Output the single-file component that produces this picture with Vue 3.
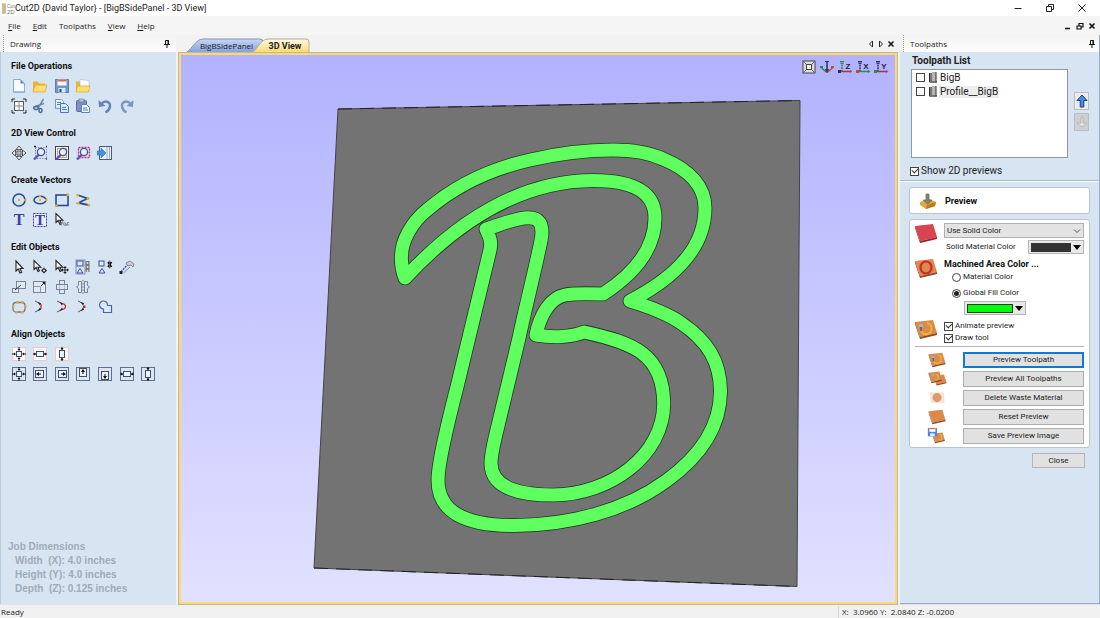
<script setup>
import { ref } from 'vue'

const menus = ['File', 'Edit', 'Toolpaths', 'View', 'Help']

const frame = '<rect x="1.5" y="1.5" width="13" height="13" fill="#dbe5f3" stroke="#5d6f8c"/>'
const pinkFrame = '<rect x="1.5" y="1.5" width="13" height="13" fill="#fffafa" stroke="#eec6cc"/>'
const sq = '<rect x="5.5" y="5.5" width="5" height="5" fill="#eef3fa" stroke="#3f4f6b"/>'
const hArrows = '<path d="M1 8h3M12 8h3" stroke="#111"/><path d="M5 8L3 6.500v3zM11 8l2-1.500v3z" fill="#111"/>'
const vArrows = '<path d="M8 1v3M8 12v3" stroke="#111"/><path d="M8 5L6.500 3h3zM8 11l-1.500 2h3z" fill="#111"/>'
const hBox = '<rect x="4.500" y="5.500" width="7" height="5" fill="#eef3fa" stroke="#3f4f6b"/><path d="M1 8h3M12 8h3" stroke="#111"/><path d="M4 8L2 6.500v3zM12 8l2-1.500v3z" fill="#111"/>'
const vBox = '<rect x="5.500" y="4.500" width="5" height="7" fill="#eef3fa" stroke="#3f4f6b"/><path d="M8 1v3M8 12v3" stroke="#111"/><path d="M8 4L6.500 2h3zM8 12l-1.500 2h3z" fill="#111"/>'
const pointer = '<path d="M5 2v10l2.300-2L9 14l1.700-.8L9 9.500h3z" fill="#fff" stroke="#222" stroke-width="1.100"/>'
const smallPointer = '<path d="M2 1.500v9l2.200-2L6 12.500l1.400-.7L5.800 8.200h3z" fill="#fff" stroke="#222" stroke-width="1.100"/>'
const lens = '<path d="M7 9.500L2 14.500" stroke="#6a4fc0" stroke-width="2.400"/><circle cx="9" cy="7" r="3.600" fill="#e8eefc" stroke="#4b4f86" stroke-width="1.300"/>'
const nodes = '<path d="M3 2l6 3M3 13l6-3" stroke="#556" stroke-width="1" fill="none"/><path d="M5.500 3l3.500 1.200L8 6.500zM5.500 12L9 10.800 8 8.500z" fill="#223"/>'

const art = {
  newFile: '<path d="M2.500 1.500h7l4 4v9h-11z" fill="#f7fbff" stroke="#8aa9d6"/><path d="M9.500 1.500v4h4z" fill="#5f8fd8"/><path d="M3 13h10v1.500H3z" fill="#9fc0ea"/>',
  open: '<path d="M1 3.500h5l1.500 2H13v8H1z" fill="#e9b437"/><path d="M3.500 7H15l-2 7H1z" fill="#ffdf74" stroke="#dba52d" stroke-width=".7"/>',
  save: '<path d="M1.500 1.500h13v13h-13z" fill="#6f97d6" stroke="#5a7cbc"/><path d="M3.500 1.500h9v6h-9z" fill="#f6f8fb"/><path d="M3.500 1.500h9v2h-9z" fill="#e0644d"/><path d="M4.500 10h7v4.500h-7z" fill="#dfe7f2"/><path d="M5.500 11h2v3h-2z" fill="#345"/>',
  import: '<path d="M1 3.500h5l1.500 1.500H14v9H1z" fill="#e9b437"/><path d="M5 1.500l9 1v7H5z" fill="#fff" stroke="#a5b7ce" stroke-width=".6"/><path d="M2.500 8H15l-1.500 6H1z" fill="#ffdf74" stroke="#dba52d" stroke-width=".7"/>',
  jobSetup: '<path d="M1 4V1h3M12 1h3v3M15 12v3h-3M4 15H1v-3" stroke="#222" fill="none"/><rect x="3.500" y="3.500" width="9" height="9" fill="#fff" stroke="#555"/><path d="M8 3v10M3 8h10" stroke="#888"/>',
  cut: '<path d="M11.500 1L6.500 9.500M3 8.500l9-3" stroke="#7187a8" stroke-width="1.500"/><ellipse cx="4" cy="10" rx="2.300" ry="1.500" fill="none" stroke="#4f6da5" stroke-width="1.500"/><ellipse cx="8.500" cy="12.500" rx="1.500" ry="2" fill="none" stroke="#4f6da5" stroke-width="1.500"/>',
  copy: '<path d="M1.500 1.500h6l2 2v7h-8z" fill="#e8f1fd" stroke="#6c97d3"/><path d="M6.500 5.500h5l3 3v6h-8z" fill="#d8e8fb" stroke="#4879c0"/><path d="M3 4.500h4M3 6.500h3M8 9.500h4M8 11.500h5" stroke="#4c80c6"/>',
  paste: '<rect x="1.500" y="2.500" width="10" height="11" rx="1" fill="#7f8fc6" stroke="#5b6cab"/><rect x="4" y="1" width="5" height="3" fill="#b9c1d6" stroke="#67718f" stroke-width=".6"/><path d="M6.500 6.500h5l3 3v5h-8z" fill="#f1f6fd" stroke="#5c82be"/><path d="M8 10h4M8 12h5" stroke="#4c80c6"/>',
  undo: '<path d="M4 6c5-5 9.500-1.500 9 2.500-.3 2.500-2 4.500-4.500 6" fill="none" stroke="#6583b8" stroke-width="2.400"/><path d="M1.500 2l.5 7 6.500-1z" fill="#6583b8"/>',
  redo: '<path d="M12 6C7 1 2.500 4.500 3 8.500c.3 2.500 2 4.500 4.500 6" fill="none" stroke="#7c97bd" stroke-width="2.400"/><path d="M14.500 2L14 9 7.500 8z" fill="#7c97bd"/>',
  pan: '<path d="M8 1l3 3.500H5zM8 15l3-3.500H5zM1 8l3.500-3v6zM15 8l-3.500-3v6z" fill="#eee" stroke="#444" stroke-width=".9"/><path d="M8 4v8M4 8h8" stroke="#444" stroke-width="3"/><path d="M8 4.500v7M4.500 8h7" stroke="#e9eef5" stroke-width="1"/>',
  zoomBox: '<rect x="3.500" y="2.500" width="11" height="11" fill="none" stroke="#7f95b4" stroke-dasharray="1.500 1"/><path d="M2 1.500h2M14 1.500h1M14 14h1" stroke="#222" stroke-width="1.500"/>' + lens,
  zoomFit: '<rect x="1.500" y="1.500" width="13" height="13" fill="#f5f6f4" stroke="#444"/><rect x="3.500" y="3.500" width="9" height="9" fill="none" stroke="#aaa"/>' + lens,
  zoomSel: '<rect x="3.500" y="2.500" width="11" height="10" fill="none" stroke="#c23a8e" stroke-width="1.500" stroke-dasharray="2 1"/>' + lens,
  toggleView: '<rect x="2.500" y="1.500" width="12" height="13" fill="#eef1fb" stroke="#4a5b80"/><path d="M10 2v12M12.500 2v12" stroke="#9aa5d4"/><path d="M0 6h4V3l5 5-5 5v-3H0z" fill="#3d92e8" stroke="#2a6fc0" stroke-width=".6"/>',
  circle: '<circle cx="8" cy="8" r="6" fill="none" stroke="#2b4d8e" stroke-width="1.600"/><path d="M7 7h2v2H7zM13 7h2.500v2H13z" fill="#e3a72d"/>',
  ellipse: '<ellipse cx="8" cy="8" rx="6" ry="3.800" fill="none" stroke="#2b4d8e" stroke-width="1.600"/><path d="M7 7h2v2H7zM7 3h2v2H7zM13 7h2.500v2H13z" fill="#e3a72d"/>',
  rect: '<rect x="2" y="3" width="12" height="10.500" fill="none" stroke="#2b4d8e" stroke-width="1.600"/><path d="M12.500 1.500H15V4h-2.500zM1 12.500h2.500V15H1z" fill="#e3a72d"/>',
  polyline: '<path d="M2.500 3l10 3.500L3.500 11l10 2" fill="none" stroke="#2b4d8e" stroke-width="1.800"/><path d="M1.500 2h2.500v2.500H1.500zM11.500 5.500H14V8h-2.500zM2 10h2.500v2.500H2zM12.500 12H15v2.500h-2.500z" fill="#e3a72d"/>',
  text: '<text x="8" y="13" text-anchor="middle" font-family="Liberation Serif, serif" font-weight="bold" font-size="16" fill="#3c3f9a">T</text>',
  textBox: '<rect x="1.500" y="1.500" width="13" height="13" fill="#e7ebfb" stroke="#3c3f9a" stroke-dasharray="2 1"/><text x="8" y="13" text-anchor="middle" font-family="Liberation Serif, serif" font-weight="bold" font-size="15" fill="#3c3f9a">T</text>',
  textEdit: smallPointer + '<path d="M7 13.500l1.500-4 1.500 4M11 10v3.500h1.500v-1.500H11M15 10.500h-1.500v2.500H15" fill="none" stroke="#888" stroke-width="1"/>',
  select: pointer,
  nodeEdit: smallPointer + '<path d="M12 8.500l3 3-3 3-3-3z" fill="#222"/><circle cx="12" cy="11.500" r="1" fill="#fff"/>',
  move: smallPointer + '<path d="M11 7l1.800 2h-3.600zM11 15l1.800-2h-3.600zM7 11l2-1.800v3.600zM15 11l-2-1.800v3.600z" fill="#222"/><path d="M11 8v6M8 11h6" stroke="#222"/>',
  group: '<rect x="2" y="2" width="6" height="5" fill="#dfe6ff" stroke="#3b4da0"/><path d="M2 14l3-4.500L8 14z" fill="#dfe6ff" stroke="#3b4da0"/><rect x="1" y="1" width="9" height="14" fill="none" stroke="#67739b" stroke-width=".7"/><path d="M12.500 2v11" stroke="#777" stroke-width="4"/><path d="M12.500 3v2M12.500 7v2M12.500 11v2" stroke="#ddd" stroke-width="1.500"/>',
  ungroup: '<rect x="2" y="2" width="5" height="5" fill="#dfe6ff" stroke="#3b4da0"/><path d="M2 14l3-4.500L8 14z" fill="#dfe6ff" stroke="#3b4da0"/><path d="M11 3l3.500 5M14.500 3L11 8" stroke="#111" stroke-width="1.800"/><path d="M12.700 1.500v8" stroke="#555"/>',
  measure: '<path d="M2 13l7-8" stroke="#4a56a8" stroke-dasharray="2 1" stroke-width="1.500"/><path d="M4.500 14l6.500-6" stroke="#889" stroke-width="1"/><path d="M0.500 12h3v3h-3z" fill="#223"/><path d="M7 4l4-2 4 3-1 3-2-2-3 1z" fill="#ccd" stroke="#777" stroke-width=".8"/>',
  moveSize: '<rect x="5.500" y="2.500" width="9" height="7" fill="#e2e9f2" stroke="#75849b"/><rect x="1.500" y="9.500" width="6" height="4" fill="#e2e9f2" stroke="#75849b"/><path d="M4 11l6-5" stroke="#333"/>',
  scale: '<rect x="1.500" y="2.500" width="12" height="11" fill="#e2e9f2" stroke="#75849b"/><path d="M1.500 7.500h7v6" fill="none" stroke="#8d99ab"/><path d="M9 7l3-3" stroke="#222"/><path d="M13 3v3l-3-3z" fill="#222"/>',
  rotate: '<rect x="5.500" y="1.500" width="5" height="13" fill="#dde6f0" stroke="#75849b"/><rect x="2.500" y="5.500" width="11" height="5" fill="#dde6f0" fill-opacity=".6" stroke="#75849b"/>',
  mirror: '<path d="M6.500 2.500h-3v4l-2 1.500 2 1.500v4h3zM9.500 2.500h3v4l2 1.500-2 1.500v4h-3z" fill="#dde6f0" stroke="#75849b"/><path d="M8 1v14" stroke="#889" stroke-dasharray="2 1"/>',
  offset: '<rect x="2" y="3.500" width="12" height="9.500" rx="3" fill="none" stroke="#5d7fb4" stroke-width="1.300"/><path d="M1 6h2.500v2.500H1zM5 2h2.500v2.500H5zM10 2h2.500v2.500H10zM13 6h2.500v2.500H13zM4 12h2.500v2.500H4zM10 12h2.500v2.500H10z" fill="#e3a72d"/>',
  joinLine: nodes + '<path d="M9 5v5" stroke="#d32626" stroke-width="1.300"/>',
  joinCurve: nodes + '<path d="M8.500 4.500c4 1 4 5 0 6" stroke="#d32626" fill="none" stroke-width="1.200"/>',
  joinMove: nodes + '<path d="M8 6.500h2.500v2.500H8z" fill="#d32626"/>',
  weld: '<path d="M10.500 6.500h4v7h-8v-3.500a4 4 0 1 1 4-3.500z" fill="#dce7fb" stroke="#4467ab" stroke-width="1.200"/>',
  centerP: pinkFrame + sq + hArrows + vArrows,
  centerHP: pinkFrame + hBox,
  centerVP: pinkFrame + vBox,
  center: frame + sq + hArrows + vArrows,
  left: frame + '<rect x="3.500" y="4.500" width="8" height="7" fill="#eef3fa" stroke="#3f4f6b"/><path d="M4 8l3-2v4z" fill="#111"/><path d="M5 8h4" stroke="#111"/>',
  right: frame + '<rect x="4.500" y="4.500" width="8" height="7" fill="#eef3fa" stroke="#3f4f6b"/><path d="M12 8L9 6v4z" fill="#111"/><path d="M7 8h4" stroke="#111"/>',
  top: frame + '<rect x="4.500" y="2.500" width="7" height="8" fill="#eef3fa" stroke="#3f4f6b"/><path d="M8 3l2 3H6z" fill="#111"/><path d="M8 5v3" stroke="#111"/>',
  bottom: frame + '<rect x="4.500" y="5.500" width="7" height="8" fill="#eef3fa" stroke="#3f4f6b"/><path d="M8 13l-2-3h4z" fill="#111"/><path d="M8 8v3" stroke="#111"/>',
  alignH: frame + hBox,
  alignV: frame + vBox
}

const axis = (a, ca, b, cb, letter) =>
  `<path d="M5 13V4" stroke="${a}" stroke-width="1.500" stroke-dasharray="2 .7"/><path d="M4 12.500h10" stroke="${cb}" stroke-width="1.500"/><path d="M3 2.500h4M3 4h4" stroke="${a}"/><path d="M1 11h3v3H1z" fill="${ca}"/><path d="M13 11l2.500 1.500L13 14z" fill="${b}"/><text x="11" y="9.500" text-anchor="middle" font-family="Liberation Sans, sans-serif" font-weight="bold" font-size="8" fill="#1e2440">${letter}</text>`

const viewTools = [
  { name: 'Fit view', art: '<rect x="2" y="2" width="12" height="12" fill="#dcdcd8" stroke="#444"/><rect x="5.500" y="5.500" width="5" height="5" fill="#f4f4f0" stroke="#444"/><path d="M2 2l3 3M14 2l-3 3M2 14l3-3M14 14l-3-3" stroke="#666"/>' },
  { name: 'Isometric view', art: '<path d="M8 3v9" stroke="#27345f" stroke-width="1.500"/><path d="M6 2.500h4" stroke="#27345f"/><path d="M8 13.500L2.500 9" stroke="#2c8a4a" stroke-width="1.500"/><path d="M8 13.500L13.500 9" stroke="#c04a3a" stroke-width="1.500"/><path d="M1 7h3v2H1z" fill="#2c8a4a"/><path d="M12 7h3v2h-3z" fill="#c04a3a"/><path d="M6 10h4l-2 4z" fill="#27345f"/>' },
  { name: 'View along Z', art: axis('#2c8a4a', '#27345f', '#c04a3a', '#a23a46', 'Z') },
  { name: 'View along X', art: axis('#27345f', '#c04a3a', '#2c8a4a', '#2c8a4a', 'X') },
  { name: 'View along Y', art: axis('#27345f', '#2c8a4a', '#c04a3a', '#a23a46', 'Y') }
]

const groups = [
  { title: 'File Operations', rows: [['newFile', 'open', 'save', 'import'], ['jobSetup', 'cut', 'copy', 'paste', 'undo', 'redo']] },
  { title: '2D View Control', rows: [['pan', 'zoomBox', 'zoomFit', 'zoomSel', 'toggleView']] },
  { title: 'Create Vectors', rows: [['circle', 'ellipse', 'rect', 'polyline'], ['text', 'textBox', 'textEdit']] },
  { title: 'Edit Objects', rows: [['select', 'nodeEdit', 'move', 'group', 'ungroup', 'measure'], ['moveSize', 'scale', 'rotate', 'mirror'], ['offset', 'joinLine', 'joinCurve', 'joinMove', 'weld']] },
  { title: 'Align Objects', rows: [['centerP', 'centerHP', 'centerVP'], ['center', 'left', 'right', 'top', 'bottom', 'alignH', 'alignV']] }
]

const letterPath =
  'M405 278C402 270 401 262 401.500 255C402 240 412 222 427 210C455 186 490 169 530 160C560 153 590 150 613 150C635 150 650 153 663 159C690 170 705 187 705 208C705 245 680 275 630 301C650 307 668 314 681 323C708 341 720 362 720.500 390C721 430 695 460 666 481C625 511 570 525 515 525.500C465 526 438 512 438 480C438 462 449 418 457 387L490 250C492 240 489 236 486 229C500 225 515 218 528 217.700C539 217.500 543 224 541.700 236C541 245 526 305 519 338L496 434C493 447 491 455 491 463C491 485 512 495 553 495C610 495 664 455 663.700 403C663 355 635 343 584 332C572 337 553 338 536 335C540 315 550 298 565 295C575 293 590 293.500 603 294C640 270 655 245 655 218C655 190 630 180.500 593 180.500C520 181 457 222 405 278Z'

const tile = (face, edge) => `<path d="M1 3l18-2 4 13-17 4z" fill="${face}"/><path d="M1 3l5 15v2L1 5zM6 18l17-4v2L6 20z" fill="${edge}"/>`
const wood = tile('#d98a4c', '#8e4a20')
const tiles = {
  red: tile('#d9454f', '#9c2530'),
  ring: wood + '<ellipse cx="12" cy="9.500" rx="5.500" ry="6" fill="none" stroke="#d3262b" stroke-width="2.200"/>',
  carve: wood + '<path d="M13 4c6 1 6 10 0 11-3 .5-5-1-6-3" fill="none" stroke="#f0b030" stroke-width="2"/><path d="M5 5h4v3H5z" fill="#9fb6c4"/><path d="M7 8v4" stroke="#556" stroke-width="1.500"/>',
  double: '<g transform="translate(7 4) scale(.75)">' + wood + '</g><g transform="scale(.8)">' + wood + '</g><path d="M10 4c5 1 5 7 0 8" fill="none" stroke="#f0b030" stroke-width="1.600"/><path d="M5 4h3v3H5z" fill="#9fb6c4"/>',
  waste: '<path d="M2 3h19l1 14H4z" fill="#f5e6dc"/><ellipse cx="12" cy="10" rx="6" ry="6" fill="#dd9b6b"/>',
  plain: wood,
  saveTile: '<g transform="translate(5 5) scale(.75)">' + wood + '<path d="M13 4c6 1 6 10 0 11" fill="none" stroke="#f0b030" stroke-width="2"/></g><path d="M0 0h12v11H0z" fill="#4e86d8"/><path d="M2 0h8v5H2z" fill="#fff"/><path d="M2 0h8v1.500H2z" fill="#e0644d"/><path d="M3 7h6v4H3z" fill="#dfe7f2"/>'
}

const actions = [
  { label: 'Preview Toolpath', icon: 'carve', main: true },
  { label: 'Preview All Toolpaths', icon: 'double' },
  { label: 'Delete Waste Material', icon: 'waste' },
  { label: 'Reset Preview', icon: 'plain' },
  { label: 'Save Preview Image', icon: 'saveTile' }
]

const toolpaths = ref([
  { name: 'BigB', on: false, active: false },
  { name: 'Profile__BigB', on: false, active: true }
])
const show2d = ref(true)
const animate = ref(true)
const drawTool = ref(true)
const fill = ref('global')
const material = ref('Use Solid Color')
</script>

<template>
  <div class="app">
    <header class="titlebar">
      <svg class="logo" width="13" height="13" viewBox="0 0 13 13" aria-hidden="true">
        <path d="M0 1h4v11H0z" fill="#dcd9ae" /><path d="M1 1v11M3 2v9" stroke="#a9a77c" />
        <text x="5" y="6" font-family="Liberation Sans, sans-serif" font-size="5" fill="#777">Cut</text>
        <text x="5" y="12" font-family="Liberation Sans, sans-serif" font-size="6" fill="#777">2D</text>
      </svg>
      <h1>Cut2D {David Taylor} - [BigBSidePanel - 3D View]</h1>
      <div class="winbtns">
        <button aria-label="Minimize"><svg width="10" height="10" viewBox="0 0 10 10"><path d="M1.500 5.500h7" stroke="#222" /></svg></button>
        <button aria-label="Restore"><svg width="10" height="10" viewBox="0 0 10 10"><path d="M1.500 3.500h5v5h-5zM3.500 3.500v-2h5v5h-2" fill="none" stroke="#222" /></svg></button>
        <button aria-label="Close window"><svg width="10" height="10" viewBox="0 0 10 10"><path d="M1.500 1.500l7 7M8.500 1.500l-7 7" stroke="#222" /></svg></button>
      </div>
    </header>

    <nav class="menubar">
      <button v-for="m in menus" :key="m"><span :class="{ key: m !== 'Toolpaths' }">{{ m[0] }}</span>{{ m.slice(1) }}</button>
      <div class="mdi">
        <button aria-label="Minimize view"><svg width="8" height="8" viewBox="0 0 8 8"><path d="M1 6.500h5" stroke="#111" stroke-width="1.500" /></svg></button>
        <button aria-label="Restore view"><svg width="8" height="8" viewBox="0 0 8 8"><path d="M1 4h4v3H1zM3 4V1.500h4V5H5" fill="none" stroke="#111" stroke-width="1.200" /></svg></button>
        <button aria-label="Close view"><svg width="8" height="8" viewBox="0 0 8 8"><path d="M1.500 1.500l5 5M6.500 1.500l-5 5" stroke="#111" stroke-width="1.600" /></svg></button>
      </div>
    </nav>

    <main class="work">
      <aside class="panel left">
        <div class="panelhead">
          <span>Drawing</span>
          <button aria-label="Pin drawing panel"><svg width="8" height="10" viewBox="0 0 8 10"><path d="M2.500 1.500h3v4h-3zM5 1v5M1 5.500h6M4 6v3" fill="none" stroke="#111" /></svg></button>
        </div>
        <div class="drawbody">
          <section v-for="g in groups" :key="g.title" class="toolgroup">
            <h2>{{ g.title }}</h2>
            <div v-for="(row, i) in g.rows" :key="i" class="toolrow">
              <button v-for="t in row" :key="t" :aria-label="t"><svg width="16" height="16" viewBox="0 0 16 16" v-html="art[t]"></svg></button>
            </div>
          </section>
          <dl class="job">
            <dt>Job Dimensions</dt>
            <dd>Width&nbsp; (X): 4.0 inches</dd>
            <dd>Height (Y): 4.0 inches</dd>
            <dd>Depth&nbsp; (Z): 0.125 inches</dd>
          </dl>
        </div>
      </aside>

      <section class="center">
        <div class="tabbar">
          <button class="tab blue">
            <svg viewBox="0 0 80 15" preserveAspectRatio="none" aria-hidden="true">
              <defs><linearGradient id="tabBlue" x1="0" y1="0" x2="0" y2="1"><stop offset="0" stop-color="#c6d7f5" /><stop offset="1" stop-color="#7f9fdc" /></linearGradient></defs>
              <path d="M0 15C6 15 11 1 19 1h57q3 0 3 3v11z" fill="url(#tabBlue)" stroke="#8496b8" />
            </svg>
            <span>BigBSidePanel</span>
          </button>
          <button class="tab gold">
            <svg viewBox="0 0 60 15" preserveAspectRatio="none" aria-hidden="true">
              <defs><linearGradient id="tabGold" x1="0" y1="0" x2="0" y2="1"><stop offset="0" stop-color="#fffbe9" /><stop offset="1" stop-color="#ffd769" /></linearGradient></defs>
              <path d="M0 15C6 15 10 1 18 1h38q3 0 3 3v11z" fill="url(#tabGold)" stroke="#b5ad95" />
            </svg>
            <span>3D View</span>
          </button>
          <div class="tabnav">
            <button aria-label="Previous tab"><svg width="8" height="8" viewBox="0 0 8 8"><path d="M5.500 1v6l-3-3z" fill="#fff" stroke="#222" /></svg></button>
            <button aria-label="Next tab"><svg width="8" height="8" viewBox="0 0 8 8"><path d="M2.500 1v6l3-3z" fill="#fff" stroke="#222" /></svg></button>
            <button aria-label="Close tab"><svg width="8" height="8" viewBox="0 0 8 8"><path d="M1.500 1.500l5 5M6.500 1.500l-5 5" stroke="#111" stroke-width="1.500" /></svg></button>
          </div>
        </div>
        <div class="viewport">
          <svg class="scene" viewBox="181 55 714 547" role="img" aria-label="3D preview of the letter B">
            <path d="M338 109L800 100.500 797 586.500 314 568z" fill="#737373" stroke="#444" stroke-width="1" />
            <path d="M338 109L800 100.500M314 568l483 18.500" stroke="#222" stroke-width="1" stroke-dasharray="14 8" />
            <path :d="letterPath" fill="none" stroke="#1d3d1d" stroke-width="14.600" stroke-linejoin="round" />
            <path :d="letterPath" fill="none" stroke="#5fff5f" stroke-width="13" stroke-linejoin="round" />
          </svg>
          <div class="viewtools">
            <button v-for="v in viewTools" :key="v.name" :aria-label="v.name"><svg width="16" height="16" viewBox="0 0 16 16" v-html="v.art"></svg></button>
          </div>
        </div>
      </section>

      <aside class="panel right">
        <div class="panelhead">
          <span>Toolpaths</span>
          <button aria-label="Pin toolpaths panel"><svg width="8" height="10" viewBox="0 0 8 10"><path d="M2.500 1.500h3v4h-3zM5 1v5M1 5.500h6M4 6v3" fill="none" stroke="#111" /></svg></button>
        </div>
        <div class="pathbody">
          <section class="pathlist">
            <h2>Toolpath List</h2>
            <div class="listrow">
              <ul>
                <li v-for="t in toolpaths" :key="t.name">
                  <label>
                    <input v-model="t.on" type="checkbox" />
                    <svg width="8" height="11" viewBox="0 0 8 11" aria-hidden="true"><path d="M0 1h3v8h5v2H1L0 10z" fill="#777" /><path d="M3 0h4v9H3z" fill="#b5b5b5" /><path d="M7 0v10M0.500 1v9" stroke="#333" /></svg>
                    <span :class="{ active: t.active }">{{ t.name }}</span>
                  </label>
                </li>
              </ul>
              <div class="order">
                <button aria-label="Move up"><svg width="12" height="14" viewBox="0 0 12 14"><path d="M6 1l5 5.500H7.800V13H4.200V6.500H1z" fill="#4b8be0" stroke="#17408c" /></svg></button>
                <button aria-label="Move down" class="off" disabled><svg width="12" height="14" viewBox="0 0 12 14"><path d="M5 2h2v6h4l-5 4-5-4h4z" fill="#e4e4e4" stroke="#a9a9a9" stroke-width=".7" /></svg></button>
              </div>
            </div>
            <label class="show"><input v-model="show2d" type="checkbox" /><span>Show 2D previews</span></label>
          </section>

          <section class="form">
            <div class="card title">
              <svg width="18" height="18" viewBox="0 0 18 18" aria-hidden="true"><path d="M1 10l9-3 7 3-1 4-9 3-6-4z" fill="#e0a83a" /><path d="M7 17l9-3 1-4-9 3z" fill="#b97c1c" /><path d="M7 2h3v6h3l-4.500 4L4 8h3z" fill="#8a8272" stroke="#5f5848" stroke-width=".6" /></svg>
              <h3>Preview</h3>
            </div>
            <div class="card main">
              <div class="block">
                <svg class="tile" width="24" height="21" viewBox="0 0 24 21" aria-hidden="true" v-html="tiles.red"></svg>
                <div class="stack">
                  <div class="selectwrap">
                    <select v-model="material" aria-label="Material"><option>Use Solid Color</option></select>
                    <svg width="8" height="6" viewBox="0 0 8 6" aria-hidden="true"><path d="M1 1.500l3 3 3-3" fill="none" stroke="#555" /></svg>
                  </div>
                  <div class="colorrow">
                    <span id="smc">Solid Material Color</span>
                    <button class="swatch dark" aria-labelledby="smc"><i></i><svg width="8" height="5" viewBox="0 0 8 5"><path d="M0 0h8L4 5z" fill="#000" /></svg></button>
                  </div>
                </div>
              </div>
              <div class="block">
                <svg class="tile" width="24" height="21" viewBox="0 0 24 21" aria-hidden="true" v-html="tiles.ring"></svg>
                <div class="stack area">
                  <h3>Machined Area Color ...</h3>
                  <label class="opt"><input v-model="fill" type="radio" value="material" name="fill" /><span>Material Color</span></label>
                  <label class="opt second"><input v-model="fill" type="radio" value="global" name="fill" /><span>Global Fill Color</span></label>
                  <button class="swatch green" aria-label="Global fill color"><i></i><svg width="8" height="5" viewBox="0 0 8 5"><path d="M0 0h8L4 5z" fill="#000" /></svg></button>
                </div>
              </div>
              <div class="block">
                <svg class="tile" width="24" height="21" viewBox="0 0 24 21" aria-hidden="true" v-html="tiles.carve"></svg>
                <div class="stack checks">
                  <label><input v-model="animate" type="checkbox" /><span>Animate preview</span></label>
                  <label><input v-model="drawTool" type="checkbox" /><span>Draw tool</span></label>
                </div>
              </div>
              <div class="actions">
                <div v-for="a in actions" :key="a.label" class="action">
                  <svg width="22" height="16" viewBox="0 0 24 21" aria-hidden="true" v-html="tiles[a.icon]"></svg>
                  <button :class="{ primary: a.main }">{{ a.label }}</button>
                </div>
              </div>
            </div>
            <button class="close">Close</button>
          </section>
        </div>
      </aside>
    </main>

    <footer class="status">
      <span>Ready</span>
      <span class="coords">X:&nbsp; 3.0960 Y:&nbsp; 2.0840 Z: -0.0200</span>
    </footer>
  </div>
</template>

<style>
html, body, #app { height: 100%; }
body { background: #f0f0f0; }
</style>

<style scoped>
.app {
  height: 100%;
  display: flex;
  flex-direction: column;
  font-family: Roboto, "Noto Sans", sans-serif;
  font-size: 9px;
  line-height: 12px;
  color: #1c1c1c;
  overflow: hidden;
}
.app *, .app { box-sizing: border-box; }
button, select { font: inherit; color: inherit; background: none; border: 0; padding: 0; margin: 0; }
button { display: inline-flex; align-items: center; justify-content: center; white-space: nowrap; }
h1, h2, h3, ul, dl, dt, dd { margin: 0; padding: 0; font-size: inherit; list-style: none; }
svg { display: block; flex: none; }

.menubar, .panelhead, .tab.blue, .status { font-family: "Open Sans", "Noto Sans", sans-serif; font-size: 8px; }

.titlebar { flex: none; height: 16px; background: #fff; display: flex; align-items: center; padding: 0 13px 0 2px; }
.titlebar h1 { font-weight: 400; }
.winbtns { margin-left: auto; display: flex; gap: 22px; }
.winbtns button { width: 10px; height: 10px; }

.menubar { flex: none; height: 19px; display: flex; align-items: center; gap: 12px; padding: 0 4px 0 8px; background: #f5f5f5; }
.key { text-decoration: underline; }
.mdi { margin-left: auto; display: flex; gap: 4px; }

.work { flex: 1; min-height: 0; display: flex; background: #f2f2f2; }
.panel { flex: none; display: flex; flex-direction: column; }
.left { width: 16%; }
.right { width: 200px; border-right: 1px solid #94abc9; }
.panelhead {
  flex: none; height: 17px; display: flex; align-items: center; justify-content: space-between;
  padding: 0 5px 0 6px; margin-left: 3px; border-left: 1px dotted #999;
  background: linear-gradient(#f3f3f3, #fcfcfc);
}
.right .panelhead { padding-right: 3px; }

.drawbody { flex: 1; display: flex; flex-direction: column; gap: 7px; padding: 4px 17px 8px 7px; background: #d7e4f2; border-left: 1px solid #bccbdc; }
.toolgroup h2 { height: 20px; line-height: 20px; padding-left: 3px; font-size: 9px; font-weight: 700; color: #111; }
.toolrow { height: 20px; display: grid; grid-template-columns: repeat(7, 1fr); align-items: center; }
.job { margin-top: auto; line-height: 14px; font-family: "Liberation Sans", Arial, sans-serif; font-size: 10px; font-weight: 700; color: #9eacb9; white-space: nowrap; }
.job dd { padding-left: 7px; }

.center { flex: 1; min-width: 0; display: flex; flex-direction: column; margin: 0 3px; }
.tabbar { flex: none; height: 18px; display: flex; align-items: flex-end; padding: 0 2px 0 5px; }
.tab { position: relative; height: 15px; width: 80px; }
.tab svg { position: absolute; inset: 0; width: 100%; height: 100%; }
.tab span { position: relative; padding-left: 5px; }
.tab.gold { width: 60px; margin-left: -14px; font-weight: 700; }
.tab.gold span { padding-left: 10px; }
.tabnav { margin-left: auto; height: 18px; display: flex; align-items: center; gap: 2px; }
.viewport {
  position: relative; flex: 1; min-height: 0;
  border: 2px solid #ffd96e; outline: 1px solid #bdb8a9;
  background: linear-gradient(#b2b2ff, #e1e1ff);
}
.scene { width: 100%; height: 100%; }
.viewtools { position: absolute; top: 4px; right: 6px; display: flex; gap: 2px; }

.pathbody { flex: 1; background: #d7e4f2; border-bottom: 1px solid #94abc9; }
.pathlist { padding: 0 10px 3px 11px; border-bottom: 1px solid #a9b8c9; }
.pathlist h2 { height: 17px; line-height: 17px; padding-left: 1px; font-size: 10px; font-weight: 700; color: #222; }
.listrow { display: flex; gap: 6px; align-items: center; }
.listrow ul { flex: 1; height: 89px; background: #fff; border: 1px solid #8d99a6; }
.listrow li label { display: flex; align-items: center; height: 14px; padding-left: 4px; }
.listrow li svg { margin: 0 2px 0 4px; }
.listrow li span { padding: 0 1px; font-size: 10px; margin-top: 2px; }
.active { background: #eee; }
.order { display: flex; flex-direction: column; gap: 3px; padding-bottom: 4px; }
.order button { width: 15px; height: 18px; background: #ececec; border: 1px solid #b9bec4; }
.order .off { background: #cfcfcf; }
.show { display: flex; align-items: center; gap: 2px; margin: 7px 0 0 -1px; height: 12px; font-size: 10px; }

input[type="checkbox"], input[type="radio"] { appearance: none; flex: none; width: 9px; height: 9px; margin: 0; border: 1px solid #444; background: #fff; display: grid; place-items: center; }
input[type="checkbox"]:checked::after { content: ""; width: 5px; height: 3px; border: solid #333; border-width: 0 0 1px 1px; transform: rotate(-45deg); margin-bottom: 2px; }
input[type="radio"] { border-radius: 50%; }
input[type="radio"]:checked::after { content: ""; width: 5px; height: 5px; border-radius: 50%; background: #222; }

.form { display: flex; flex-direction: column; gap: 5px; padding: 5px 9px 0 9px; border-top: 1px solid #fff; font-size: 8px; }
.card { background: #fff; border: 1px solid #bcc4cd; border-radius: 3px; }
.card h3 { font-size: 9px; font-weight: 700; color: #111; }
.card.title { height: 27px; display: flex; align-items: center; gap: 8px; padding-left: 9px; }
.card.main { padding: 3px 5px; display: flex; flex-direction: column; gap: 4px; }
.block { display: flex; gap: 6px; }
.tile { margin-left: -1px; }
.stack { flex: 1; min-width: 0; display: flex; flex-direction: column; gap: 2px; }
.selectwrap { position: relative; }
.selectwrap select { appearance: none; display: block; width: 100%; height: 15px; padding: 0 2px; line-height: 13px; background: #e3e3e3; border: 1px solid #b0b0b0; }
.selectwrap svg { position: absolute; right: 3px; top: 5px; }
.colorrow { display: flex; align-items: center; justify-content: space-between; padding-left: 2px; }
.swatch { height: 14px; width: 56px; gap: 2px; padding: 0 2px; background: #e8e8e8; border: 1px solid #b5b5b5; }
.swatch i { flex: 1; height: 9px; border: 1px solid #333; background: #323232; }
.swatch.green { width: 62px; margin: 0 0 0 20px; }
.swatch.green i { background: #0f0; }
.area { gap: 0; }
.area h3 { height: 13px; line-height: 13px; }
.opt { display: flex; align-items: center; gap: 2px; height: 12px; padding-left: 8px; }
.opt.second { margin: 4px 0 2px; }
.checks { gap: 0; padding-top: 1px; }
.checks label { display: flex; align-items: center; gap: 2px; height: 12px; }
.actions { display: flex; flex-direction: column; gap: 3px; padding-top: 5px; border-top: 1px solid #b5b5b5; margin-top: -2px; }
.action { display: flex; gap: 15px; padding-left: 11px; }
.action button { flex: 1; height: 16px; background: #e1e1e1; border: 1px solid #adadad; }
.action button.primary { border: 2px solid #1479d2; }
.close { align-self: flex-end; width: 53px; height: 15px; margin-right: 5px; background: #e1e1e1; border: 1px solid #b5b5b5; }

.status { flex: none; height: 14px; display: grid; grid-template-columns: 1fr 262px; align-items: center; padding-left: 1px; background: #f0f0f0; border-top: 1px solid #e2e2e2; }
.coords { border-left: 1px solid #d9d9d9; padding-left: 3px; }
</style>
